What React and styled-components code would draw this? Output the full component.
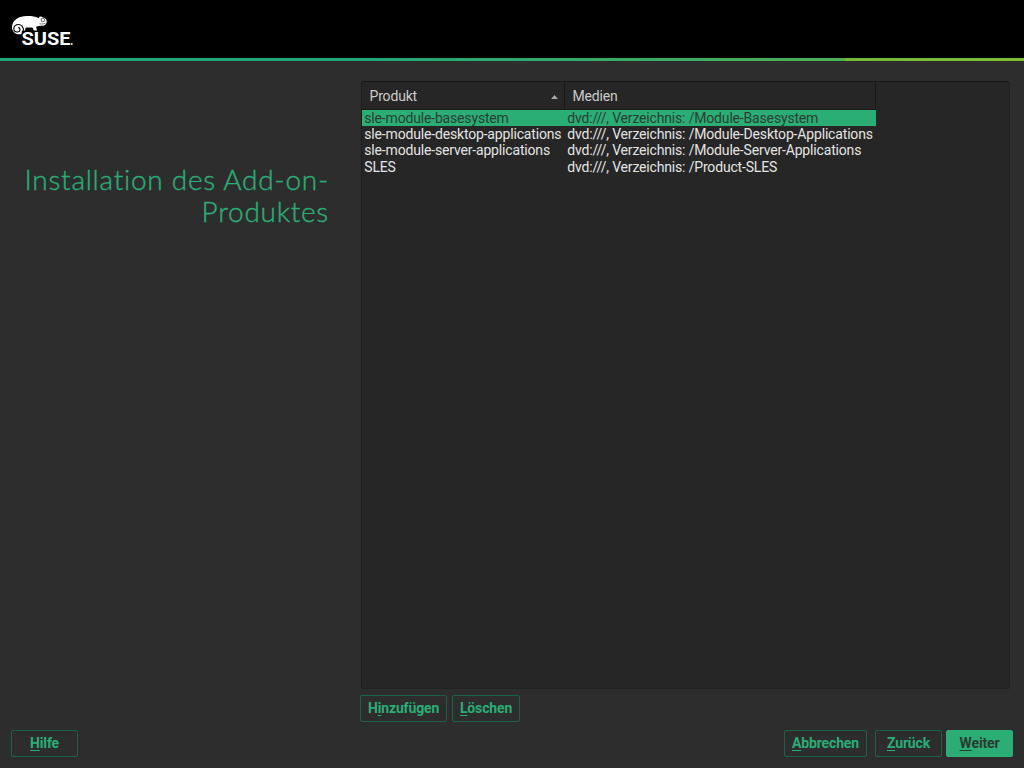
import React from 'react';
import styled, { createGlobalStyle } from 'styled-components';

const green = '#2aae75';

const GlobalStyle = createGlobalStyle`
  * { box-sizing: border-box; }
  body {
    margin: 0;
    background: #2d2d2d;
    color: #e2e2e2;
    font: 14px/16px Roboto, 'Liberation Sans', sans-serif;
    letter-spacing: -0.17px;
    overflow: hidden;
  }
`;

const Screen = styled.div`
  display: flex;
  flex-direction: column;
  width: 1024px;
  height: 768px;
  background: #2d2d2d;
`;

const Banner = styled.header`
  height: 58px;
  padding: 14px 11px;
  background: #000;
`;

const Logo = styled.svg`
  display: block;
  overflow: visible;
`;

const Stripe = styled.div`
  height: 3px;
  background: linear-gradient(90deg, #1fa67a 0 35%, #4bb256 82.4%, #73b933 82.6%, #7fbf30);
`;

const Main = styled.main`
  flex: 1;
  display: flex;
`;

const Side = styled.aside`
  width: 360px;
  padding: 102px 31px 0 0;
`;

const Title = styled.h1`
  margin: 0;
  color: ${green};
  font: 300 28px/32px Lato, 'Open Sans', sans-serif;
  letter-spacing: 0.73px;
  text-align: right;
  -webkit-text-stroke: 0.4px ${green};
`;

const Content = styled.section`
  width: 650px;
  padding-top: 20px;
`;

const TableFrame = styled.div`
  height: 608px;
  margin-left: 1px;
  border: 1px solid #212121;
  border-top-color: #191919;
  border-left-color: #1c1c1c;
  border-radius: 3px;
  background: #262626;
`;

const columns = '203px 311px';

const HeaderRow = styled.div`
  display: grid;
  grid-template-columns: ${columns};
  width: 514px;
  height: 28px;
  border-bottom: 1px solid #191919;
`;

const HeaderCell = styled.div`
  display: flex;
  align-items: center;
  justify-content: space-between;
  padding: 1px 6px 0 7.5px;
  border-right: 1px solid #191919;
  color: #cbcbcb;
`;

const SortArrow = styled.svg`
  margin-top: 2px;
`;

const Row = styled.div`
  display: grid;
  grid-template-columns: ${columns};
  width: 514px;
  height: 16.2px;
  background: ${(p) => (p.$selected ? green : 'transparent')};
  color: ${(p) => (p.$selected ? '#2b3d34' : '#e4e4e4')};
`;

const Cell = styled.div`
  padding-left: 2.3px;
  white-space: nowrap;
`;

const Buttons = styled.div`
  display: flex;
  gap: 5px;
  padding-top: 6px;
`;

const Button = styled.button`
  width: ${(p) => p.$width}px;
  height: 27px;
  padding: 0 0 1px;
  border: 1px solid ${(p) => (p.$primary ? green : '#1b6143')};
  border-radius: 2px;
  background: ${(p) => (p.$primary ? green : 'transparent')};
  color: ${(p) => (p.$primary ? '#2a3a32' : green)};
  font: 700 14px/16px Roboto, 'Liberation Sans', sans-serif;
  letter-spacing: -0.15px;
`;

const Key = styled.span`
  text-decoration: underline;
  text-decoration-thickness: 1px;
  text-underline-offset: 2px;
  text-decoration-skip-ink: none;
`;

const Footer = styled.footer`
  display: flex;
  height: 38px;
  padding: 0 11px;
`;

const Navigation = styled.div`
  display: flex;
  margin-left: auto;
`;

const BackGroup = styled.div`
  display: flex;
  gap: 4px;
  margin-left: 8px;
`;

const rows = [
  ['sle-module-basesystem', 'dvd:///, Verzeichnis: /Module-Basesystem'],
  ['sle-module-desktop-applications', 'dvd:///, Verzeichnis: /Module-Desktop-Applications'],
  ['sle-module-server-applications', 'dvd:///, Verzeichnis: /Module-Server-Applications'],
  ['SLES', 'dvd:///, Verzeichnis: /Product-SLES'],
];

function SuseLogo() {
  return (
    <Logo width="63" height="32" viewBox="0 0 63 32">
      <path
        fill="#fff"
        d="M1 12.500C1.500 6 8 2 16 2c5 0 9 .6 12 2.200 0-1.500 1-2.200 2.500-1.500 2 1 4.500 1.200 5 3.500.7 3-1 5.500-4 5.500-3 .1-4.500.2-6 .9-.6.700-.2 2 .8 3.900h-3.500c-.8-1.800-1-3-2-3h-5c-1.500 0-2 1.500-1.500 3h-3.300l-.5 3.500C5 21.500.5 17.500 1 12.500z"
      />
      <path
        fill="none"
        stroke="#000"
        strokeWidth="1.100"
        d="M12.500 16.500c0-3.700-2.200-6-5.200-6-2.500 0-4.500 1.800-4.500 4.100 0 2 1.500 3.400 3.400 3.400 1.700 0 2.800-1.100 2.800-2.500 0-1.200-.9-1.900-1.900-1.900"
      />
      <circle cx="31.800" cy="6" r="1.800" fill="none" stroke="#000" strokeWidth=".6" />
      <path d="M28.500 9.600c2 .7 4 .6 6-.5" fill="none" stroke="#000" strokeWidth=".5" />
      <text
        x="10.500"
        y="31"
        fill="#fff"
        stroke="#000"
        strokeWidth="1.400"
        paintOrder="stroke"
        fontFamily="Roboto, sans-serif"
        fontWeight="700"
        fontSize="19"
        letterSpacing="0"
        textLength="49"
        lengthAdjust="spacingAndGlyphs"
      >
        SUSE
      </text>
      <circle cx="60.800" cy="30" r=".9" fill="#fff" />
    </Logo>
  );
}

export default function App() {
  return (
    <>
      <GlobalStyle />
      <Screen>
        <Banner>
          <SuseLogo />
        </Banner>
        <Stripe />
        <Main>
          <Side>
            <Title>
              Installation des Add-on-
              <br />
              Produktes
            </Title>
          </Side>
          <Content>
            <TableFrame>
              <HeaderRow>
                <HeaderCell>
                  Produkt
                  <SortArrow width="7" height="4" viewBox="0 0 7 4">
                    <path d="M0 4L3.500 0L7 4z" fill="#a5a5a5" />
                  </SortArrow>
                </HeaderCell>
                <HeaderCell>Medien</HeaderCell>
              </HeaderRow>
              {rows.map(([product, media], i) => (
                <Row key={product} $selected={i === 0}>
                  <Cell>{product}</Cell>
                  <Cell>{media}</Cell>
                </Row>
              ))}
            </TableFrame>
            <Buttons>
              <Button $width={87}>
                H<Key>i</Key>nzufügen
              </Button>
              <Button $width={68}>
                <Key>L</Key>öschen
              </Button>
            </Buttons>
          </Content>
        </Main>
        <Footer>
          <Button $width={67}>
            <Key>H</Key>ilfe
          </Button>
          <Navigation>
            <Button $width={83}>
              <Key>A</Key>bbrechen
            </Button>
            <BackGroup>
              <Button $width={67}>
                <Key>Z</Key>urück
              </Button>
              <Button $width={67} $primary>
                <Key>W</Key>eiter
              </Button>
            </BackGroup>
          </Navigation>
        </Footer>
      </Screen>
    </>
  );
}
